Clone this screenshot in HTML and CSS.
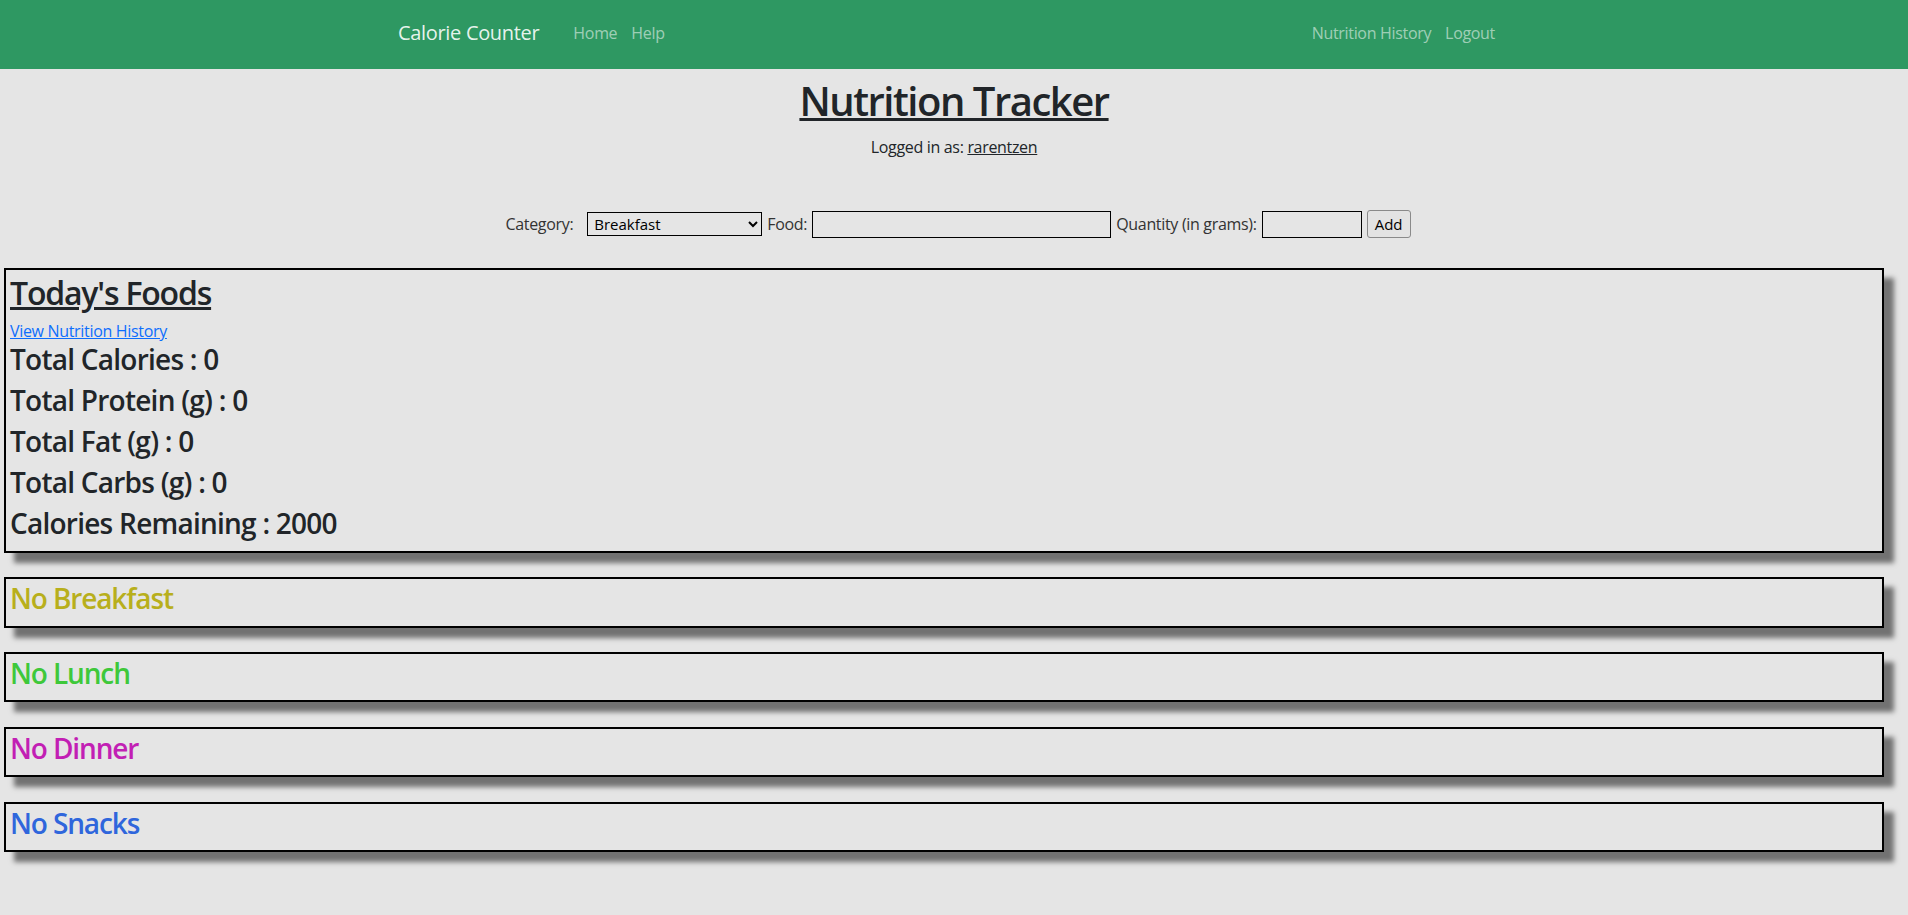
FILE: index.html
```html
<!DOCTYPE html>
<html lang="en">
<head>
<meta charset="utf-8">
<title>Nutrition Tracker</title>
<link rel="stylesheet" href="styles.css">
</head>
<body>
<nav class="navbar">
  <div class="nav-container">
    <a class="brand" href="#">Calorie Counter</a>
    <ul class="nav-list">
      <li><a class="nav-link" href="#">Home</a></li>
      <li><a class="nav-link" href="#">Help</a></li>
    </ul>
    <ul class="nav-list nav-right">
      <li><a class="nav-link" href="#">Nutrition History</a></li>
      <li><a class="nav-link" href="#">Logout</a></li>
    </ul>
  </div>
</nav>

<header class="page-head">
  <h1 class="page-title">Nutrition Tracker</h1>
  <p class="logged">Logged in as: <a class="user" href="#">rarentzen</a></p>
</header>

<form class="add-form">
  <label class="lbl lbl-cat" for="cat">Category:</label>
  <select id="cat" class="sel">
    <option>Breakfast</option>
    <option>Lunch</option>
    <option>Dinner</option>
    <option>Snacks</option>
  </select>
  <label class="lbl" for="food">Food:</label>
  <input id="food" class="inp inp-food" type="text">
  <label class="lbl" for="qty">Quantity (in grams):</label>
  <input id="qty" class="inp inp-qty" type="text">
  <button class="btn" type="button">Add</button>
</form>

<main class="boxes">
  <section class="box box-summary">
    <h2 class="summary-title">Today's Foods</h2>
    <a class="history-link" href="#">View Nutrition History</a>
    <h3 class="stat">Total Calories : 0</h3>
    <h3 class="stat">Total Protein (g) : 0</h3>
    <h3 class="stat">Total Fat (g) : 0</h3>
    <h3 class="stat">Total Carbs (g) : 0</h3>
    <h3 class="stat">Calories Remaining : 2000</h3>
  </section>
  <section class="box box-meal">
    <h3 class="meal meal-breakfast">No Breakfast</h3>
  </section>
  <section class="box box-meal">
    <h3 class="meal meal-lunch">No Lunch</h3>
  </section>
  <section class="box box-meal">
    <h3 class="meal meal-dinner">No Dinner</h3>
  </section>
  <section class="box box-meal">
    <h3 class="meal meal-snacks">No Snacks</h3>
  </section>
</main>
</body>
</html>
```
FILE: styles.css
```css
* { box-sizing: border-box; }

html, body {
  margin: 0;
  padding: 0;
}

body {
  background: #e5e5e5;
  color: #212529;
  font-family: "Open Sans", "Noto Sans", sans-serif;
  font-size: 16px;
  line-height: 24px;
  letter-spacing: -0.02em;
}

/* NAVBAR */
.navbar {
  background: #2e9862;
  height: 69px;
}
.nav-container {
  width: 1140px;
  margin: 0 auto;
  height: 100%;
  padding: 0 12px 3px 14px;
  display: flex;
  align-items: center;
}
.brand {
  font-size: 20px;
  line-height: 30px;
  color: rgba(255, 255, 255, 0.9);
  text-decoration: none;
  margin-right: 27px;
}
.nav-list {
  list-style: none;
  margin: 0;
  padding: 0;
  display: flex;
}
.nav-right {
  margin-left: auto;
  margin-right: 10px;
}
.nav-link {
  display: block;
  padding: 0 7px;
  color: rgba(255, 255, 255, 0.55);
  text-decoration: none;
  line-height: 24px;
}

/* HEADER */
.page-head {
  text-align: center;
  padding-top: 8px;
}
.page-title {
  margin: 0 0 10px;
  font-size: 40px;
  line-height: 48px;
  font-weight: 600;
  letter-spacing: -0.037em;
  text-decoration: underline;
  text-decoration-thickness: 3px;
  text-underline-offset: 2px;
}
.logged {
  margin: 0;
}
.user {
  color: #212529;
}

/* FORM */
.add-form {
  display: flex;
  justify-content: center;
  align-items: center;
  gap: 5px;
  margin-top: 51px;
  height: 28px;
  padding-left: 8px;
}
.lbl {
  color: #333;
}
.lbl-cat {
  margin-right: 9px;
}
.sel {
  width: 175px;
  height: 24px;
  border: 1px solid #000;
  border-radius: 0;
  background: transparent;
  font: inherit;
  font-size: 15px;
  color: #000;
  padding: 0 2px;
}
.inp {
  height: 27px;
  border: 1px solid #000;
  background: transparent;
  font: inherit;
  padding: 0 4px;
}
.inp-food { width: 299px; }
.inp-qty { width: 100px; }
.btn {
  width: 44px;
  height: 28px;
  font: inherit;
  font-size: 15px;
  color: #000;
  background: #e3e3e3;
  border: 1px solid #8a8a8a;
  border-radius: 3px;
  padding: 0;
}

/* BOXES */
.boxes {
  margin: 30px 24px 0 4px;
}
.box {
  border: 2px solid #000;
  box-shadow: 10px 10px 5px rgba(0, 0, 0, 0.5);
  margin-bottom: 24.5px;
}
.box-summary {
  padding: 4px 4px 3px;
}
.summary-title {
  margin: 0 0 7px;
  font-size: 32px;
  line-height: 38px;
  font-weight: 600;
  letter-spacing: -0.037em;
  text-decoration: underline;
  text-decoration-thickness: 3px;
  text-underline-offset: 2px;
}
.history-link {
  display: block;
  width: max-content;
  color: #0d6efd;
  font-size: 16px;
}
.stat {
  margin: 0 0 7.4px;
  font-size: 28px;
  line-height: 33.6px;
  font-weight: 600;
  letter-spacing: -0.027em;
}
.box-meal {
  padding: 3px 4px 0;
}
.meal {
  margin: 0 0 9.7px;
  font-size: 28px;
  line-height: 33.6px;
  font-weight: 600;
  letter-spacing: -0.04em;
}
.meal-breakfast { color: #b8af1c; }
.meal-lunch { color: #3ec83a; }
.meal-dinner { color: #c21fb4; }
.meal-snacks { color: #2f66dc; }
```
